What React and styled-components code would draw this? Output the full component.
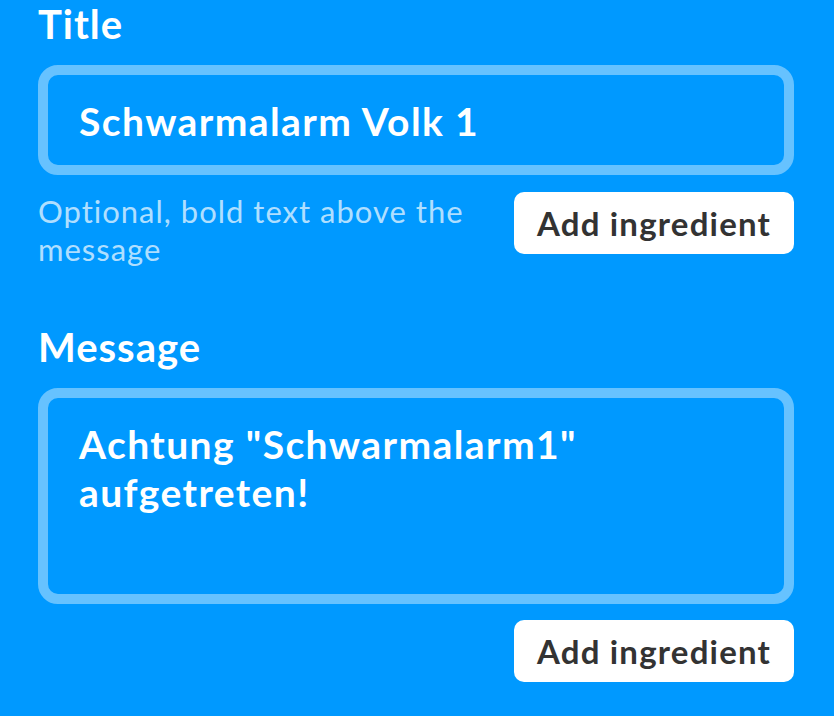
import React from "react";
import styled, { createGlobalStyle } from "styled-components";

const Global = createGlobalStyle`
  html, body { margin: 0; padding: 0; background: #0099ff; }
  body { font-family: Lato, "Open Sans", sans-serif; -webkit-font-smoothing: antialiased; }
`;

const Page = styled.div`
  width: 834px;
  height: 716px;
  overflow: hidden;
  box-sizing: border-box;
  padding: 0 40px 0 38px;
  background: #0099ff;
  display: flex;
  flex-direction: column;
  gap: 55px;
`;

const Field = styled.section`
  display: flex;
  flex-direction: column;
`;

const Label = styled.label`
  font-size: 40px;
  line-height: 48px;
  font-weight: 700;
  letter-spacing: 1px;
  color: #ffffff;
  margin-bottom: 17px;
`;

const InputBox = styled.div`
  box-sizing: border-box;
  border: 10px solid rgba(255, 255, 255, 0.4);
  border-radius: 20px;
  padding: 22px 30px 20px 31px;
  min-height: ${(p) => p.$minHeight || 110}px;
  font-size: 39px;
  line-height: 48px;
  font-weight: 700;
  letter-spacing: 1.4px;
  color: #ffffff;
`;

const Row = styled.div`
  display: flex;
  justify-content: space-between;
  align-items: flex-start;
  margin-top: ${(p) => p.$gap}px;
`;

const Helper = styled.p`
  margin: 0;
  width: 450px;
  font-size: 31px;
  line-height: 38px;
  font-weight: 400;
  letter-spacing: 1px;
  color: rgba(255, 255, 255, 0.7);
`;

const IngredientButton = styled.button`
  flex: none;
  width: 280px;
  height: 62px;
  border: none;
  border-radius: 10px;
  background: #ffffff;
  color: #333333;
  font-family: Lato, "Open Sans", sans-serif;
  font-size: 33px;
  font-weight: 700;
  letter-spacing: 1.2px;
  padding: 0;
  cursor: pointer;
`;

export default function App() {
  return (
    <Page>
      <Global />
      <Field>
        <Label>Title</Label>
        <InputBox $minHeight={110}>Schwarmalarm Volk 1</InputBox>
        <Row $gap={17}>
          <Helper>Optional, bold text above the message</Helper>
          <IngredientButton>Add ingredient</IngredientButton>
        </Row>
      </Field>
      <Field>
        <Label>Message</Label>
        <InputBox $minHeight={216}>
          Achtung "Schwarmalarm1" aufgetreten!
        </InputBox>
        <Row $gap={16}>
          <span />
          <IngredientButton>Add ingredient</IngredientButton>
        </Row>
      </Field>
    </Page>
  );
}
